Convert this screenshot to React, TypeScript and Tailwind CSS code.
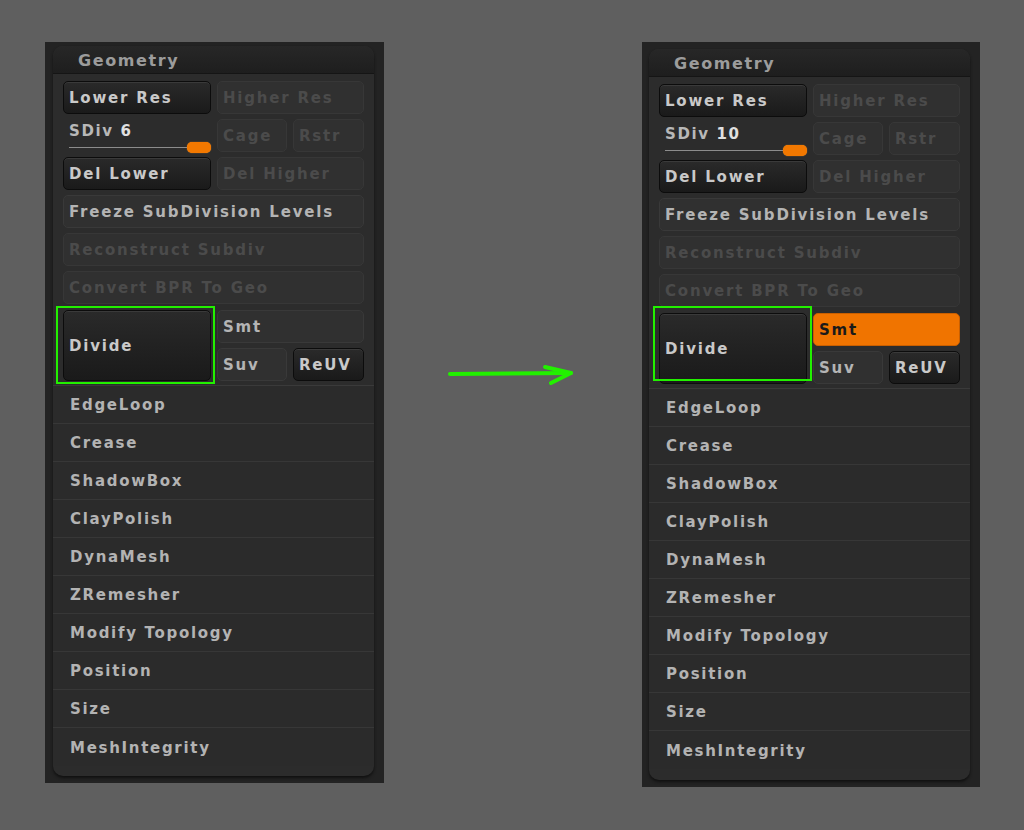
import React from 'react';

type Variant = 'dark' | 'plain' | 'off' | 'orange';

const btnStyles: Record<Variant, string> = {
  dark: 'bg-gradient-to-b from-[#2a2a2a] to-[#1a1a1a] border-[#0c0c0c] text-[#c9c9c9] shadow-[inset_0_1px_0_#3a3a3a]',
  plain: 'bg-[#303030] border-[#393939] text-[#b4b4b4]',
  off: 'bg-[#303030] border-[#373737] text-[#4b4b4b]',
  orange: 'bg-[#f07400] border-[#c95f00] text-[#1a1a1a]',
};

const Btn: React.FC<{ label: string; variant: Variant; className?: string }> = ({ label, variant, className = '' }) => (
  <div
    className={`flex items-center px-[5px] pt-[2px] rounded-[5px] border text-[15px] font-bold tracking-[1.8px] whitespace-nowrap ${btnStyles[variant]} ${className}`}
  >
    {label}
  </div>
);

const listItems = [
  'EdgeLoop',
  'Crease',
  'ShadowBox',
  'ClayPolish',
  'DynaMesh',
  'ZRemesher',
  'Modify Topology',
  'Position',
  'Size',
  'MeshIntegrity',
];

interface PanelProps {
  sdiv: string;
  smtOn: boolean;
  frameClass: string;
  panelClass: string;
  boxClass: string;
}

const GeometryPanel: React.FC<PanelProps> = ({ sdiv, smtOn, frameClass, panelClass, boxClass }) => (
  <div className={`bg-[#232323] flex flex-col ${frameClass}`}>
    <div className={`w-[321px] rounded-[10px] bg-[#2c2c2c] shadow-[0_2px_3px_#111] overflow-hidden ${panelClass}`}>
      {/* Header */}
      <div className="h-[28px] bg-gradient-to-b from-[#272727] to-[#1e1e1e] border-b border-[#151515] flex items-center pl-[25px] pt-[3px] text-[16px] font-bold tracking-[1.6px] text-[#9c9c9c]">
        Geometry
      </div>

      {/* Buttons */}
      <div className="px-[10px] pt-[7px] flex flex-col gap-[5px]">
        <div className="flex gap-[6px]">
          <Btn label="Lower Res" variant="dark" className="w-[148px] h-[33px]" />
          <Btn label="Higher Res" variant="off" className="flex-1 h-[33px]" />
        </div>
        <div className="flex gap-[6px]">
          <div className="w-[148px] h-[33px] flex flex-col pl-[6px]">
            <div className="text-[15px] font-bold tracking-[1.6px] text-[#b8b8b8] leading-[16px] mt-[4px]">
              SDiv <span className="text-[#e0e0e0]">{sdiv}</span>
            </div>
            <div className="flex items-center mt-[3px]">
              <div className="flex-1 h-px bg-[#8c8c8c]" />
              <div className="w-[24px] h-[11px] rounded-[5px] bg-[#f27800] shadow-[0_0_1px_#ff9a2a]" />
            </div>
          </div>
          <Btn label="Cage" variant="off" className="w-[70px] h-[33px]" />
          <Btn label="Rstr" variant="off" className="flex-1 h-[33px] border-[#252525]" />
        </div>
        <div className="flex gap-[6px]">
          <Btn label="Del Lower" variant="dark" className="w-[148px] h-[33px]" />
          <Btn label="Del Higher" variant="off" className="flex-1 h-[33px]" />
        </div>
        <Btn label="Freeze SubDivision Levels" variant="plain" className="h-[33px]" />
        <Btn label="Reconstruct Subdiv" variant="off" className="h-[33px]" />
        <Btn label="Convert BPR To Geo" variant="off" className="h-[33px]" />
        <div className="flex gap-[6px] mt-[1px]">
          <div className="relative w-[148px] h-[71px]">
            <Btn label="Divide" variant="dark" className="w-full h-full" />
            <div className={`absolute border-2 border-[#22f000] ${boxClass}`} />
          </div>
          <div className="flex-1 flex flex-col gap-[5px]">
            <Btn label="Smt" variant={smtOn ? 'orange' : 'plain'} className="h-[33px]" />
            <div className="flex gap-[6px]">
              <Btn label="Suv" variant="plain" className="w-[70px] h-[33px]" />
              <Btn label="ReUV" variant="dark" className="flex-1 h-[33px]" />
            </div>
          </div>
        </div>
      </div>

      {/* Sub palettes */}
      <div className="mt-[4px] border-t border-[#3a3a3a] pb-[11px]">
        {listItems.map((item, i) => (
          <div
            key={item}
            className={`h-[38px] flex items-center pl-[17px] pt-[2px] bg-[#2b2b2b] text-[15px] font-bold tracking-[1.7px] text-[#b3b3b3] ${
              i < listItems.length - 1 ? 'border-b border-[#373737]' : ''
            }`}
          >
            {item}
          </div>
        ))}
      </div>
    </div>
  </div>
);

const App: React.FC = () => {
  return (
    <div
      className="w-[1024px] h-[830px] bg-[#5f5f5f] flex items-start pl-[45px] pt-[42px]"
      style={{ fontFamily: '"DejaVu Sans", sans-serif' }}
    >
      <GeometryPanel
        sdiv="6"
        smtOn={false}
        frameClass="w-[339px] h-[741px] pl-[8px] pt-[4px]"
        panelClass="h-[730px]"
        boxClass="-left-[7px] -right-[4px] -top-[4px] -bottom-[3px]"
      />

      {/* Arrow */}
      <div className="w-[258px] pt-[320px] pl-[62px]">
        <svg width="130" height="24" viewBox="0 0 130 24" fill="none">
          <path d="M4 12 L125 11" stroke="#22f000" strokeWidth="4" strokeLinecap="round" />
          <path d="M99 5 L125 11 L105 21" stroke="#22f000" strokeWidth="4" strokeLinecap="round" strokeLinejoin="round" />
        </svg>
      </div>

      <GeometryPanel
        sdiv="10"
        smtOn={true}
        frameClass="w-[338px] h-[745px] pl-[7px] pt-[7px]"
        panelClass="h-[731px]"
        boxClass="-left-[6px] -right-[5px] -top-[7px] bottom-[3px]"
      />
    </div>
  );
};

export default App;
